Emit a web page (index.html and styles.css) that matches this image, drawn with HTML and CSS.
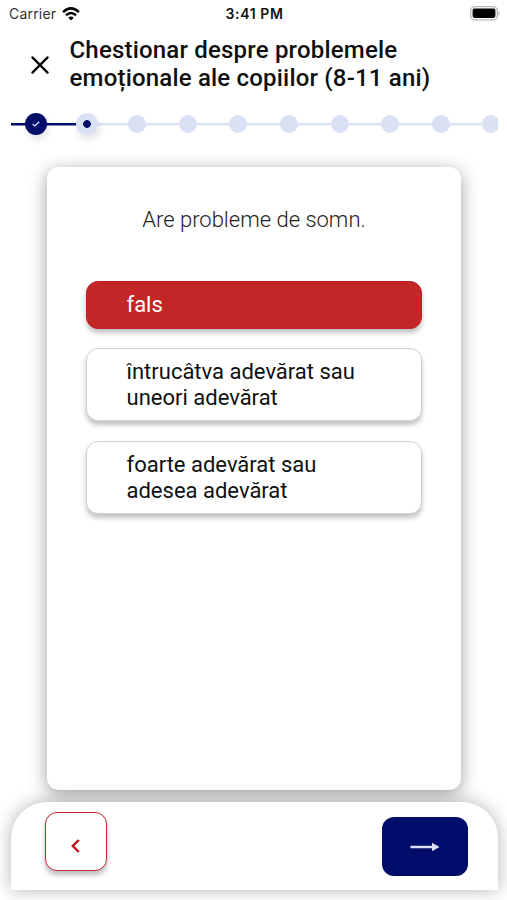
FILE: index.html
```html
<!DOCTYPE html>
<html lang="ro">
<head>
<meta charset="utf-8">
<title>Chestionar</title>
<link rel="stylesheet" href="styles.css">
</head>
<body>
<div class="screen">
  <div class="status">
    <div class="carrier"><span>Carrier</span>
      <svg width="18" height="14" viewBox="0 0 18 14" fill="none" stroke="#000" stroke-width="2.5"><path d="M1.1 5.1Q9-2.3 16.9 5.1"/><path d="M4 8.2Q9 3.7 14 8.2"/><path d="M9 13.4 6.3 10.7Q9 8.4 11.7 10.7Z" fill="#000" stroke="none"/></svg>
    </div>
    <time class="time">3:41 PM</time>
    <svg class="battery" width="31" height="15" viewBox="0 0 31 15"><rect x=".7" y=".7" width="26.6" height="13.2" rx="4" fill="#fff" stroke="#b5b5b5" stroke-width="1.3"/><rect x="2.6" y="2.6" width="22.8" height="9.4" rx="2" fill="#000"/><path d="M28.5 5Q31 7.3 28.5 9.6Z" fill="#aaa"/></svg>
  </div>
  <header class="header">
    <svg class="close" width="18" height="18" viewBox="0 0 18 18" stroke="#000" stroke-width="2.2" stroke-linecap="round" fill="none"><path d="m1.4 1.4 15.2 15.2M16.6 1.4 1.4 16.6"/></svg>
    <h1 class="title">Chestionar despre problemele<br>emoționale ale copiilor (8-11 ani)</h1>
  </header>
  <div class="stepper">
    <div class="step done"><span class="dot"><svg width="8" height="6" viewBox="0 0 8 6" fill="none" stroke="#dbe1f7" stroke-width="1.2"><path d="m.7 3 2 2L7.3.7"/></svg></span></div>
    <div class="step current"><span class="dot"></span></div>
    <div class="step"><span class="dot"></span></div>
    <div class="step"><span class="dot"></span></div>
    <div class="step"><span class="dot"></span></div>
    <div class="step"><span class="dot"></span></div>
    <div class="step"><span class="dot"></span></div>
    <div class="step"><span class="dot"></span></div>
    <div class="step"><span class="dot"></span></div>
    <div class="step"><span class="dot"></span></div>
  </div>
  <main class="card">
    <p class="question">Are probleme de somn.</p>
    <button class="option selected">fals</button>
    <button class="option">întrucâtva adevărat sau<br>uneori adevărat</button>
    <button class="option">foarte adevărat sau<br>adesea adevărat</button>
  </main>
  <footer class="footer">
    <button class="back" aria-label="Înapoi"><svg width="9" height="14" viewBox="0 0 9 14" fill="none" stroke="#bd1119" stroke-width="2.4"><path d="M7.8 1 1.8 7l6 6"/></svg></button>
    <button class="next" aria-label="Înainte"><svg width="30" height="10" viewBox="0 0 30 10"><path d="M.5 3.7H22V.8L29.5 5 22 9.2V6.3H.5Z" fill="#d9dff6"/></svg></button>
  </footer>
</div>
</body>
</html>
```
FILE: styles.css
```css
* { box-sizing: border-box; }
body { margin: 0; background: #fff; font-family: Roboto, "Liberation Sans", sans-serif; color: #101010; }
button { font: inherit; color: inherit; padding: 0; }
svg { display: block; }
.screen { height: 900px; display: flex; flex-direction: column; overflow: hidden; }
.status { height: 28px; padding: 0 6px 1px 9px; display: grid; grid-template-columns: 1fr auto 1fr; align-items: center; font-family: Inter, sans-serif; font-size: 14px; }
.carrier { display: flex; gap: 6px; align-items: center; color: #333; letter-spacing: .2px; }
.time { font-size: 14px; font-weight: 600; letter-spacing: .6px; margin-right: 1px; color: #111; }
.battery { justify-self: end; margin-top: -1px; }
.header { height: 72px; display: flex; align-items: flex-start; padding: 8px 0 0 31px; }
.close { margin: 20px 20.5px 0 0; flex: none; }
.title { margin: 0; font-size: 24px; line-height: 28px; font-weight: 500; letter-spacing: .19px; white-space: nowrap; }
.stepper { height: 48px; width: 487px; margin-left: 10.8px; display: flex; overflow: hidden; }
.step { flex: none; width: 50.6px; display: grid; place-items: center; background: linear-gradient(#dae2f6, #dae2f6) center / 100% 2.5px no-repeat; }
.dot { width: 18px; height: 18px; border-radius: 50%; background: #dae1f5; display: grid; place-items: center; }
.done { background-image: linear-gradient(#000d6b, #000d6b); }
.current { background-image: linear-gradient(90deg, #000d6b 50%, #dae2f6 50%); }
.done .dot, .current .dot { width: 22px; height: 22px; box-shadow: 2px 5px 7px rgba(0, 0, 0, .1); }
.done .dot { background: #000d6b; }
.current .dot { background: radial-gradient(circle, #000d6b 3.5px, #dae1f5 4.2px); }
.card { flex: none; width: 414px; height: 623px; margin: 19px 0 0 47px; padding: 38px 39px 0; border-radius: 12px; background: #fff; box-shadow: 0 4px 18px rgba(0, 0, 0, .38); display: flex; flex-direction: column; }
.question { margin: 0 0 45.5px; height: 30px; line-height: 30px; font-size: 22px; font-weight: 300; text-align: center; color: #222; white-space: nowrap; }
.option { flex: none; height: 73px; margin-bottom: 19.8px; padding-left: 39.5px; border: 1.5px solid #d2d2d2; border-radius: 12px; background: #fff; box-shadow: 0 4px 5px rgba(0, 0, 0, .24); font-size: 22px; line-height: 25.8px; text-align: left; }
.selected { height: 48px; border-color: #bd2028; background: #c22627; color: #fff; }
.footer { flex: none; position: relative; width: 487px; height: 88px; margin: 12px 0 0 10.5px; padding: 10px 29.5px 0 34px; display: flex; justify-content: space-between; background: #fff; border-radius: 36px 36px 0 0; box-shadow: 0 0 18px rgba(0, 0, 0, .3); }
.back { width: 62px; height: 59px; border: 1.5px solid #c4272d; border-radius: 12px; background: #fff; box-shadow: 0 4px 5px rgba(0, 0, 0, .26); display: grid; place-items: center; padding-top: 9px; }
.next { width: 86px; height: 59px; margin-top: 5px; border: 0; border-radius: 12px; background: #000d6b; display: grid; place-items: center; }
```
